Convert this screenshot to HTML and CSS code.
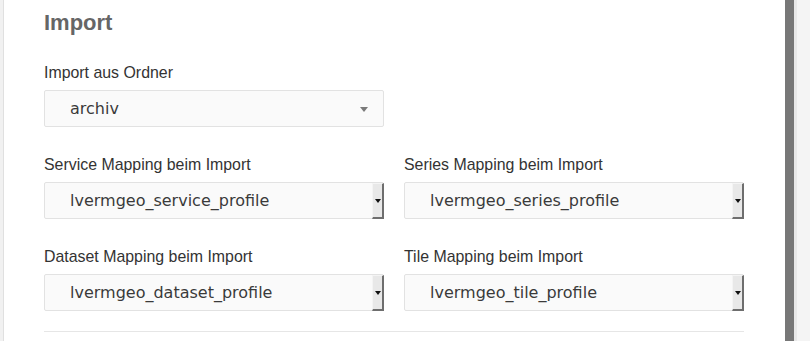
FILE: index.html
```html
<!DOCTYPE html>
<html lang="de">
<head>
<meta charset="utf-8">
<title>Import</title>
<link rel="stylesheet" href="styles.css">
</head>
<body>
<div class="gutter"></div>
<main class="panel">
  <h2 class="title">Import</h2>
  <div class="field">
    <label class="label">Import aus Ordner</label>
    <div class="select select-flat">
      <span class="value">archiv</span>
      <span class="caret"></span>
    </div>
  </div>
  <div class="grid">
    <div class="field">
      <label class="label">Service Mapping beim Import</label>
      <div class="select">
        <span class="value">lvermgeo_service_profile</span>
        <span class="btn"><span class="arrow"></span></span>
      </div>
    </div>
    <div class="field">
      <label class="label">Series Mapping beim Import</label>
      <div class="select">
        <span class="value">lvermgeo_series_profile</span>
        <span class="btn"><span class="arrow"></span></span>
      </div>
    </div>
    <div class="field">
      <label class="label">Dataset Mapping beim Import</label>
      <div class="select">
        <span class="value">lvermgeo_dataset_profile</span>
        <span class="btn"><span class="arrow"></span></span>
      </div>
    </div>
    <div class="field">
      <label class="label">Tile Mapping beim Import</label>
      <div class="select">
        <span class="value">lvermgeo_tile_profile</span>
        <span class="btn"><span class="arrow"></span></span>
      </div>
    </div>
  </div>
  <hr class="rule">
</main>
<div class="scroll">
  <div class="thumb"></div>
  <div class="edge"></div>
  <div class="track"></div>
</div>
</body>
</html>
```
FILE: styles.css
```css
html, body {
  margin: 0;
  padding: 0;
  height: 341px;
  overflow: hidden;
}
body {
  display: flex;
  background: #ffffff;
  font-family: "Liberation Sans", Arial, sans-serif;
}
.gutter {
  flex: 0 0 3px;
  background: #f1f1f1;
}
.panel {
  flex: 0 0 782px;
  box-sizing: border-box;
  border-left: 1px solid #e0e0e0;
  background: #ffffff;
  padding: 10px 41px 0 40px;
}
.title {
  margin: 0 0 27px 0;
  font-size: 22px;
  line-height: 26px;
  font-weight: bold;
  color: #666666;
}
.field {
  display: flex;
  flex-direction: column;
}
.field + .grid {
  margin-top: 28px;
}
.label {
  font-size: 15.9px;
  line-height: 20px;
  color: #333333;
  margin-bottom: 7px;
}
.grid {
  display: grid;
  grid-template-columns: 340px 340px;
  column-gap: 20px;
  row-gap: 28px;
}
.select {
  box-sizing: border-box;
  width: 340px;
  height: 37px;
  display: flex;
  align-items: stretch;
  border: 1px solid #e2e2e2;
  border-radius: 2px;
  background: #fafafa;
  font-family: "DejaVu Sans", sans-serif;
  font-size: 16px;
  color: #3a3a3a;
}
.value {
  flex: 1;
  display: flex;
  align-items: center;
  padding-left: 25px;
  padding-bottom: 1px;
}
.select-flat .caret {
  align-self: center;
  width: 0;
  height: 0;
  margin: 2px 15px 0 0;
  border-left: 4px solid transparent;
  border-right: 4px solid transparent;
  border-top: 5px solid #7a7a7a;
}
.btn {
  box-sizing: border-box;
  width: 12px;
  margin: 0 -1px -1px 0;
  background: #e8e8e8;
  border-top: 1px solid #f4f4f4;
  border-left: 1px solid #f4f4f4;
  border-right: 2px solid #6e6e6e;
  border-bottom: 2px solid #6e6e6e;
  display: flex;
  align-items: center;
  justify-content: center;
}
.arrow {
  width: 0;
  height: 0;
  margin-top: 1px;
  border-left: 3px solid transparent;
  border-right: 3px solid transparent;
  border-top: 4px solid #111111;
}
.rule {
  margin: 20px 0 0 0;
  border: 0;
  border-top: 1px solid #e6e6e6;
  height: 0;
}
.scroll {
  flex: 1;
  display: flex;
}
.thumb {
  flex: 0 0 9px;
  background: #777777;
}
.edge {
  flex: 0 0 3px;
  background: #e8e8e8;
}
.track {
  flex: 1;
  background: #f4f4f4;
}
```
